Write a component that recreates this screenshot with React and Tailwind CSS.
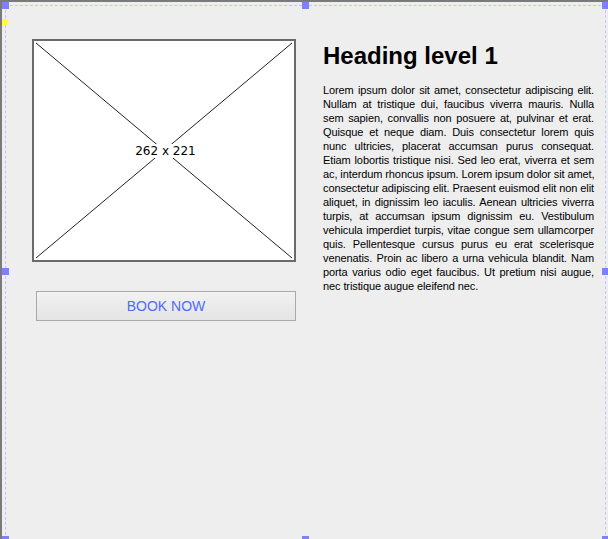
import React from 'react';

const loremLines = [
  'Lorem ipsum dolor sit amet, consectetur adipiscing elit.',
  'Nullam at tristique dui, faucibus viverra mauris. Nulla',
  'sem sapien, convallis non posuere at, pulvinar et erat.',
  'Quisque et neque diam. Duis consectetur lorem quis',
  'nunc ultricies, placerat accumsan purus consequat.',
  'Etiam lobortis tristique nisi. Sed leo erat, viverra et sem',
  'ac, interdum rhoncus ipsum. Lorem ipsum dolor sit amet,',
  'consectetur adipiscing elit. Praesent euismod elit non elit',
  'aliquet, in dignissim leo iaculis. Aenean ultricies viverra',
  'turpis, at accumsan ipsum dignissim eu. Vestibulum',
  'vehicula imperdiet turpis, vitae congue sem ullamcorper',
  'quis. Pellentesque cursus purus eu erat scelerisque',
  'venenatis. Proin ac libero a urna vehicula blandit. Nam',
  'porta varius odio eget faucibus. Ut pretium nisi augue,',
];
const lastLine = 'nec tristique augue eleifend nec.';

function Handle({ className }) {
  return <div className={`absolute w-[7px] h-[7px] bg-[#7f7fff] ${className}`} />;
}

function ImagePlaceholder() {
  return (
    <div className="relative w-[264px] h-[223px] bg-white border-2 border-[#6a6a6a]">
      <svg className="absolute inset-0 w-full h-full" viewBox="0 0 260 219" preserveAspectRatio="none">
        <line x1="2" y1="2" x2="258" y2="217" stroke="#222" strokeWidth="1" />
        <line x1="258" y1="2" x2="2" y2="217" stroke="#222" strokeWidth="1" />
      </svg>
      <div className="absolute inset-0 flex items-center justify-center">
        <span className="bg-white px-[2px] ml-[3px] text-[12px] leading-[14px] text-black font-['DejaVu_Sans',sans-serif]">
          262 x 221
        </span>
      </div>
    </div>
  );
}

export default function App() {
  return (
    <div className="relative w-[608px] h-[539px] overflow-hidden bg-[#eeeeee] border-t-2 border-l-2 border-[#7a7a7a] font-['Liberation_Sans',Arial,sans-serif]">
      {/* selection frame */}
      <div className="absolute left-[3px] top-[3px] w-[601px] h-[560px] border border-dashed border-[#c4c4ff]" />
      <Handle className="left-0 top-0" />
      <Handle className="left-[300px] top-0" />
      <Handle className="left-[600px] top-0" />
      <Handle className="left-0 top-[266px]" />
      <Handle className="left-[600px] top-[266px]" />
      <Handle className="left-0 top-[534px]" />
      <Handle className="left-[300px] top-[534px]" />
      <Handle className="left-[600px] top-[534px]" />
      <div className="absolute left-0 top-[17px] w-[6px] h-[6px] bg-[#ffff33]" />

      <div className="flex gap-[27px] pt-[37px] pl-[30px]">
        <div className="flex flex-col items-end gap-[29px] w-[264px]">
          <ImagePlaceholder />
          <button className="w-[260px] h-[30px] border border-[#aaaaaa] bg-gradient-to-b from-[#f2f2f2] to-[#e4e4e4] text-[#4d6bff] text-[14px]">
            BOOK NOW
          </button>
        </div>
        <div className="flex flex-col gap-[13px] w-[271px] pt-[3px]">
          <h1 className="text-[24px] leading-[28px] font-bold text-black">Heading level 1</h1>
          <div className="text-[11px] leading-[14px] tracking-[-0.1px] text-black">
            {loremLines.map((line) => (
              <p key={line} className="whitespace-nowrap text-justify [text-align-last:justify]">
                {line}
              </p>
            ))}
            <p className="whitespace-nowrap">{lastLine}</p>
          </div>
        </div>
      </div>
    </div>
  );
}
